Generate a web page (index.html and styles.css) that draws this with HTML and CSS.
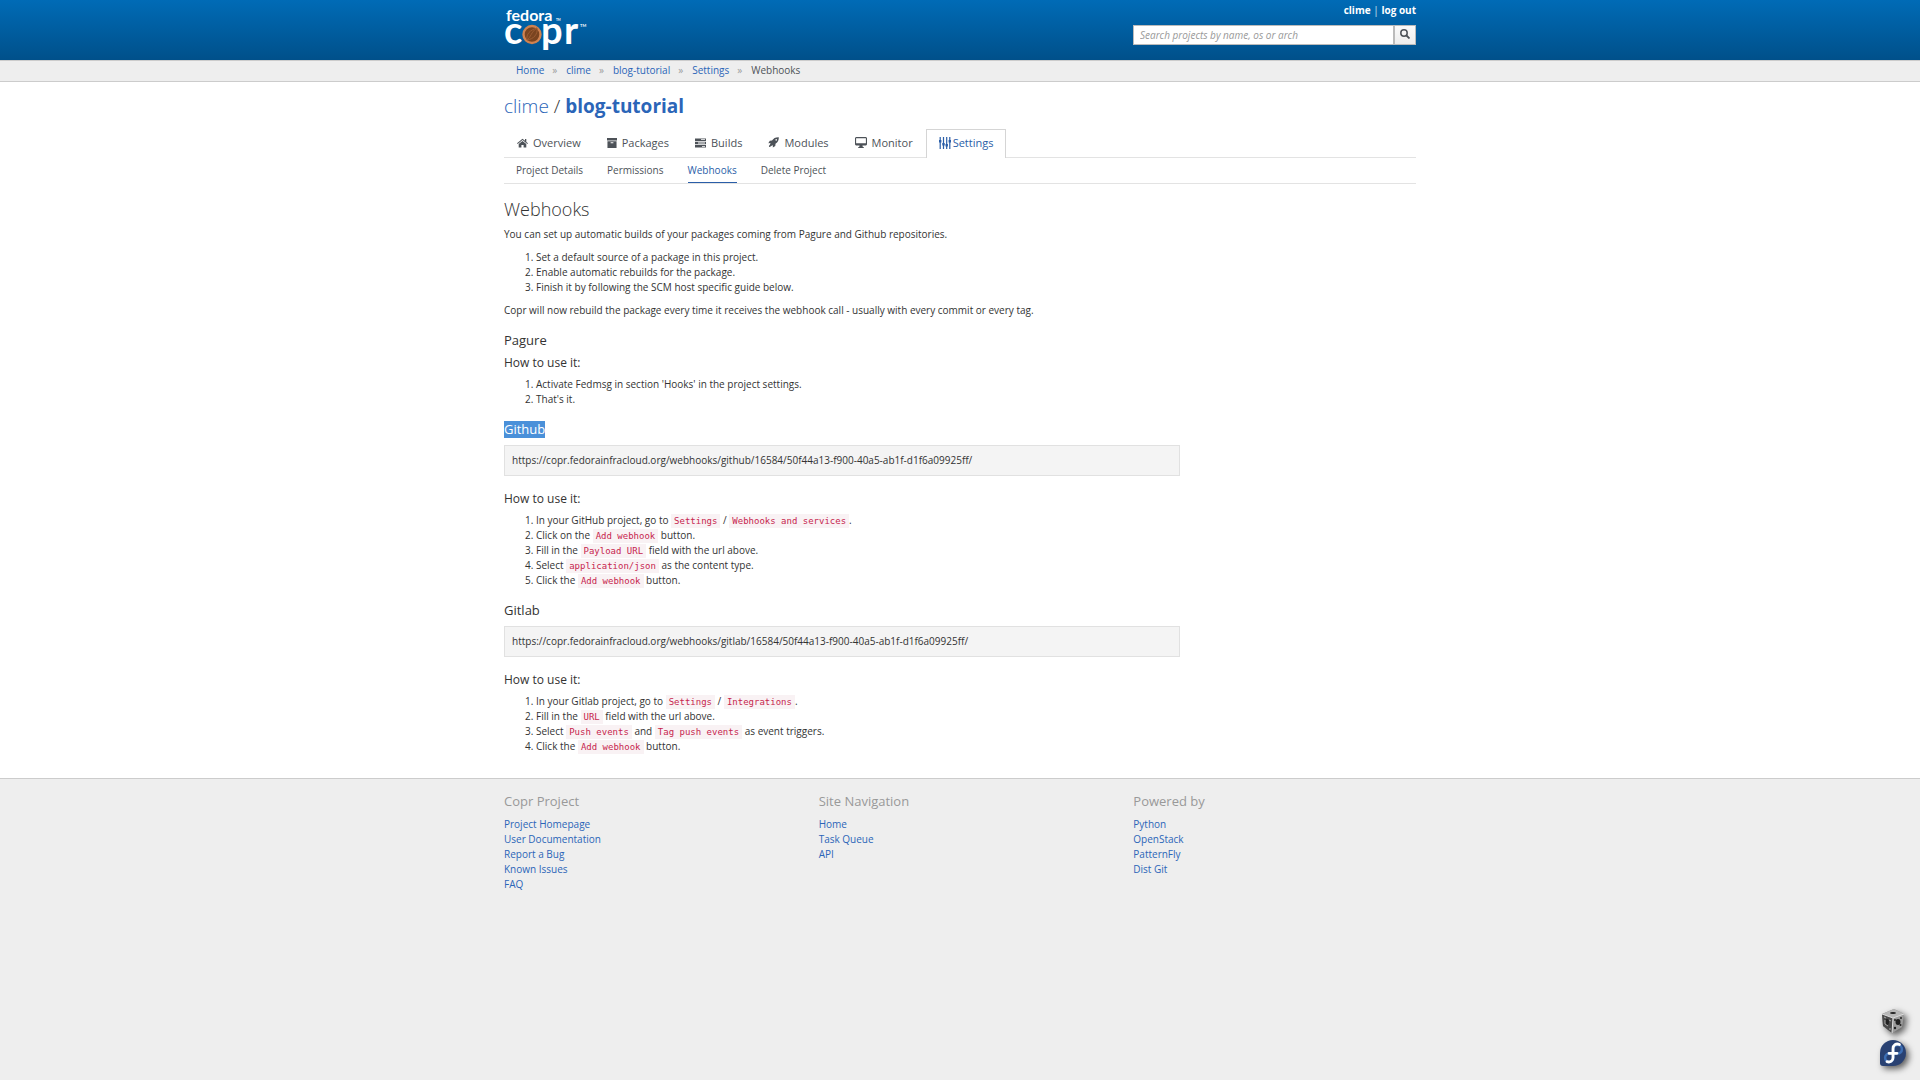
FILE: index.html
```html
<!DOCTYPE html>
<html lang="en">
<head>
<meta charset="utf-8">
<title>clime/blog-tutorial - Webhooks</title>
<link rel="stylesheet" href="styles.css">
</head>
<body>
<header class="masthead">
  <div class="container masthead-row">
    <a class="brand" href="#" aria-label="Fedora Copr">
      <svg width="84" height="56" viewBox="0 0 84 56">
        <g fill="#fff" font-family="Lato, sans-serif" font-weight="700">
          <text x="2" y="21" font-size="16">fedora</text>
          <text x="0" y="44" font-size="38">c</text>
          <text x="37" y="44" font-size="38">p</text>
          <text x="60" y="44" font-size="38">r</text>
          <text x="52" y="21" font-size="3">TM</text>
          <text x="76" y="27" font-size="4">TM</text>
        </g>
        <circle cx="28" cy="34.500" r="8.500" fill="#7a4420" stroke="#cf8250" stroke-width="2.400"/>
        <path d="M23 40c-1-6 3-10 10-12 1 6-3 11-10 12zm0 0c4-3 4-8 10-12" fill="none" stroke="#9c5c33" stroke-width="1"/>
      </svg>
    </a>
    <div class="tools">
      <div class="account"><a href="#">clime</a> <span>|</span> <a href="#">log out</a></div>
      <form class="search">
        <input type="text" placeholder="Search projects by name, os or arch" aria-label="Search projects">
        <button type="button" aria-label="Search">
          <svg width="10" height="10" viewBox="0 0 10 10" fill="none" stroke="#4d5258"><circle cx="4" cy="4" r="3.200" stroke-width="1.500"/><path d="M6.500 6.500l3 3" stroke-width="1.800"/></svg>
        </button>
      </form>
    </div>
  </div>
</header>

<nav class="crumbs" aria-label="Breadcrumb">
  <ol class="container">
    <li><a href="#">Home</a></li>
    <li><a href="#">clime</a></li>
    <li><a href="#">blog-tutorial</a></li>
    <li><a href="#">Settings</a></li>
    <li>Webhooks</li>
  </ol>
</nav>

<main class="container">
  <h1><a class="owner" href="#">clime</a> / <a class="project" href="#">blog-tutorial</a></h1>
  <ul class="tabs">
    <li><a href="#"><svg width="11" height="10" viewBox="0 0 11 10"><path d="M5.500.8 0 5.300l.7.7 4.800-3.900 4.800 3.900.7-.7L9.300 3.900V1H8v1.800z"/><path d="M1.700 6v3.500h2.700V7h2.200v2.500h2.700V6L5.500 2.900z"/></svg><span>Overview</span></a></li>
    <li><a href="#"><svg width="10" height="10" viewBox="0 0 11 10" preserveAspectRatio="none"><path d="M0 0h11v2.500H0zM.5 3.200h10V10H.5zM4 4.200v1h3v-1z" fill-rule="evenodd"/></svg><span>Packages</span></a></li>
    <li><a href="#"><svg width="11" height="10" viewBox="0 0 11 10"><path d="M0 .5h11v2.400H0zm6 .8v.8h4v-.8zM0 3.800h11v2.400H0zm3 .8v.8h7v-.8zM0 7.100h11v2.400H0zm7 .8v.8h3v-.8z" fill-rule="evenodd"/></svg><span>Builds</span></a></li>
    <li><a href="#"><svg width="11" height="11" viewBox="0 0 11 11"><path d="M10.800.2C7.500.1 5.500 1.300 4 3.500L1.800 3.700.3 6.200l2.200-.1-.5 1.300L.9 8.900l.2 1 1-.1 1.500-1.100 1.300-.5-.1 2.300 2.500-1.600.2-2.200C9.900 5.200 10.900 3.300 10.800.2zM8.200 2.100a.8.8 0 1 1 0 1.600.8.8 0 0 1 0-1.600z" fill-rule="evenodd"/></svg><span>Modules</span></a></li>
    <li><a href="#"><svg width="12" height="11" viewBox="0 0 13 11" preserveAspectRatio="none"><path d="M1 0h11l1 1v6.500l-1 1H8L8.500 10H9.500v1h-6v-1h1L5 8.500H1l-1-1V1zm.2 1.200v5h10.600v-5z" fill-rule="evenodd"/></svg><span>Monitor</span></a></li>
    <li class="active"><a href="#"><svg width="12" height="12" viewBox="0 0 12 12"><path d="M.6 0h1.200v12H.6zM3.900 0h1.200v12H3.900zM7.100 0h1.200v12H7.100zM10.200 0h1.200v12h-1.200z"/><path d="M0 3h2.400v2.500H0zM3.300 6h2.400v2.500H3.300zM6.500 7H8.900v2.500H6.500zM9.600 3H12v2.500H9.600z"/></svg><span>Settings</span></a></li>
  </ul>
  <ul class="subtabs">
    <li><a href="#">Project Details</a></li>
    <li><a href="#">Permissions</a></li>
    <li class="active"><a href="#">Webhooks</a></li>
    <li><a href="#">Delete Project</a></li>
  </ul>

  <h2>Webhooks</h2>
  <p>You can set up automatic builds of your packages coming from Pagure and Github repositories.</p>
  <ol class="steps">
    <li>Set a default source of a package in this project.</li>
    <li>Enable automatic rebuilds for the package.</li>
    <li>Finish it by following the SCM host specific guide below.</li>
  </ol>
  <p>Copr will now rebuild the package every time it receives the webhook call - usually with every commit or every tag.</p>

  <h3>Pagure</h3>
  <h4>How to use it:</h4>
  <ol class="steps">
    <li>Activate Fedmsg in section 'Hooks' in the project settings.</li>
    <li>That's it.</li>
  </ol>

  <h3><span class="selected">Github</span></h3>
  <div class="well">https://copr.fedorainfracloud.org/webhooks/github/16584/50f44a13-f900-40a5-ab1f-d1f6a09925ff/</div>
  <h4>How to use it:</h4>
  <ol class="steps">
    <li>In your GitHub project, go to <code>Settings</code> / <code>Webhooks and services</code>.</li>
    <li>Click on the <code>Add webhook</code> button.</li>
    <li>Fill in the <code>Payload URL</code> field with the url above.</li>
    <li>Select <code>application/json</code> as the content type.</li>
    <li>Click the <code>Add webhook</code> button.</li>
  </ol>

  <h3>Gitlab</h3>
  <div class="well">https://copr.fedorainfracloud.org/webhooks/gitlab/16584/50f44a13-f900-40a5-ab1f-d1f6a09925ff/</div>
  <h4>How to use it:</h4>
  <ol class="steps">
    <li>In your Gitlab project, go to <code>Settings</code> / <code>Integrations</code>.</li>
    <li>Fill in the <code>URL</code> field with the url above.</li>
    <li>Select <code>Push events</code> and <code>Tag push events</code> as event triggers.</li>
    <li>Click the <code>Add webhook</code> button.</li>
  </ol>
</main>

<footer class="footer">
  <div class="container footer-grid">
    <section>
      <h3>Copr Project</h3>
      <ul>
        <li><a href="#">Project Homepage</a></li>
        <li><a href="#">User Documentation</a></li>
        <li><a href="#">Report a Bug</a></li>
        <li><a href="#">Known Issues</a></li>
        <li><a href="#">FAQ</a></li>
      </ul>
    </section>
    <section>
      <h3>Site Navigation</h3>
      <ul>
        <li><a href="#">Home</a></li>
        <li><a href="#">Task Queue</a></li>
        <li><a href="#">API</a></li>
      </ul>
    </section>
    <section>
      <h3>Powered by</h3>
      <ul>
        <li><a href="#">Python</a></li>
        <li><a href="#">OpenStack</a></li>
        <li><a href="#">PatternFly</a></li>
        <li><a href="#">Dist Git</a></li>
      </ul>
    </section>
  </div>
</footer>

<aside class="badges">
  <a href="#" aria-label="Debug">
    <svg width="26" height="26" viewBox="0 0 26 26">
      <path d="M2 6 14 1l10 5-2 13-10 6-9-7z" fill="#888"/>
      <path d="M2 6 14 1l10 5-11 4z" fill="#b8b8b8"/>
      <path d="M2 6l11 4-1 15-9-7z" fill="#4b4b4b"/>
      <path d="M13 10l11-4-2 13-10 6z" fill="#9c9c9c"/>
      <path d="M2 6l11 4 11-4M13 10l-1 15" fill="none" stroke="#ddd" stroke-width="1"/>
      <g fill="#222"><ellipse cx="18" cy="14" rx="2.500" ry="3"/><circle cx="15" cy="12" r="1"/><circle cx="21" cy="10" r="1"/><circle cx="20.500" cy="17" r="1"/><circle cx="15" cy="20" r="1.200"/><ellipse cx="7" cy="14" rx="2" ry="3"/><ellipse cx="13" cy="5" rx="3" ry="1"/></g>
      <path d="M5 12v4l3 2M4 9l2 1M9 12l2 1M10 20v2" fill="none" stroke="#aaa"/>
    </svg>
  </a>
  <a href="#" aria-label="Fedora">
    <svg width="26" height="26" viewBox="0 0 26 26">
      <path d="M13 0a13 13 0 1 1 0 26H3a3 3 0 0 1-3-3V13A13 13 0 0 1 13 0z" fill="#294172"/>
      <path d="M13.500 13.500h-4a4.200 4.200 0 1 0 4 4.200zM13.500 13.500V9a4.200 4.200 0 1 1 4.200 4.500z" fill="none" stroke="#3c6eb4" stroke-width="2.500"/>
      <path d="M19.500 4.500c-3.500-1.500-6.500.6-6.500 4.200v9c0 3-2.500 5-6 4M9 13.300h8" fill="none" stroke="#fff" stroke-width="2.800" stroke-linecap="round"/>
    </svg>
  </a>
</aside>
</body>
</html>
```
FILE: styles.css
```css
* { box-sizing: border-box; }

html { min-height: 100%; background: #eee; }

body {
  margin: 0;
  color: #333;
  font: 10px/15px "Open Sans", "Noto Sans", sans-serif;
}

a { color: #2b65b8; text-decoration: none; }
ul, ol { margin: 0; padding: 0; list-style: none; }

.container {
  width: 100%;
  max-width: 944px;
  margin: 0 auto;
  padding: 0 16px;
}

/* Masthead */
.masthead {
  height: 60px;
  background: linear-gradient(#006bb6, #00508a);
}
.masthead-row { display: flex; justify-content: space-between; }
.brand { display: block; }
.brand svg { display: block; }
.tools { width: 283px; padding-top: 3px; }
.account { text-align: right; font-weight: 700; color: #8fbbdd; }
.account a { color: #fff; }
.search { display: flex; margin-top: 7px; }
.search input {
  flex: 1;
  min-width: 0;
  height: 20px;
  padding: 0 6px 1px;
  border: 1px solid #bbb;
  background: #fff;
  font: italic 10px/15px "Open Sans", "Noto Sans", sans-serif;
}
.search input::placeholder { color: #999; }
.search button {
  display: flex;
  align-items: center;
  justify-content: center;
  width: 22px;
  height: 20px;
  padding: 0 1px 2px 0;
  border: 1px solid #bbb;
  background: linear-gradient(#fafafa, #ededed);
}

/* Breadcrumb */
.crumbs {
  border-top: 1px solid #ccc;
  border-bottom: 1px solid #ccc;
  background: #eee;
}
.crumbs ol { display: flex; padding: 2px 28px 3px; color: #4d5258; }
.crumbs li + li::before {
  content: "»";
  padding: 0 9px 0 8px;
  color: #9c9c9c;
}

/* Page body */
main.container {
  max-width: none;
  padding: 12px max(16px, calc(50% - 456px)) 16px;
  background: #fff;
}
h1, h2, h3, h4 { margin: 0; font-weight: 400; }
h1 { font-size: 19px; line-height: 24px; font-weight: 300; }
h1 .project { font-weight: 700; }
h2 { margin: 14px 0 7px; font-size: 18px; line-height: 22px; font-weight: 300; }
h3 { margin: 14px 0 7px; font-size: 13px; line-height: 17px; }
h4 { margin-bottom: 7px; font-size: 12px; line-height: 14px; }
p { margin: 0 0 8px; }

.tabs { display: flex; margin-top: 11px; border-bottom: 1px solid #e3e3e3; }
.tabs a {
  display: flex;
  align-items: center;
  gap: 5px;
  height: 28px;
  padding: 0 12px 2px;
  border: 1px solid transparent;
  border-bottom: 0;
  color: #4d5258;
  font-size: 11px;
}
.tabs svg { fill: currentColor; }
.tabs .active a {
  gap: 2px;
  height: 29px;
  margin-bottom: -1px;
  padding-bottom: 3px;
  border-color: #d5d5d5;
  background: #fff;
  color: #2a5ea8;
}

.subtabs { display: flex; gap: 24px; padding: 0 12px; border-bottom: 1px solid #e3e3e3; }
.subtabs a { display: block; height: 25px; padding-top: 5px; color: #4d5258; }
.subtabs .active a { border-bottom: 1px solid #2a5ea8; color: #2a5ea8; }

.steps { margin-bottom: 8px; padding-left: 32px; list-style: decimal; }

.selected { display: inline-block; background: #4a90d9; color: #fff; }

.well {
  width: 676px;
  max-width: 100%;
  margin: 7px 0 16px;
  padding: 7px;
  border: 1px solid #e1e1e1;
  background: #f4f4f4;
  overflow-wrap: anywhere;
}

code {
  padding: 2px 3px;
  background: #f9f2f4;
  color: #c7254e;
  font: 9px/11px "DejaVu Sans Mono", monospace;
}

/* Footer */
.footer { border-top: 1px solid #ccc; padding: 14px 0 24px; background: #eee; }
.footer-grid { display: grid; grid-template-columns: repeat(3, 1fr); gap: 32px; }
.footer h3 { margin: 0 0 7px; color: #999; }

/* Corner badges pinned over the page */
.badges {
  position: fixed;
  right: 14px;
  bottom: 14px;
  display: grid;
  gap: 6px;
}
.badges svg { display: block; filter: drop-shadow(3px 3px 3px rgba(0, 0, 0, .6)); }
```
